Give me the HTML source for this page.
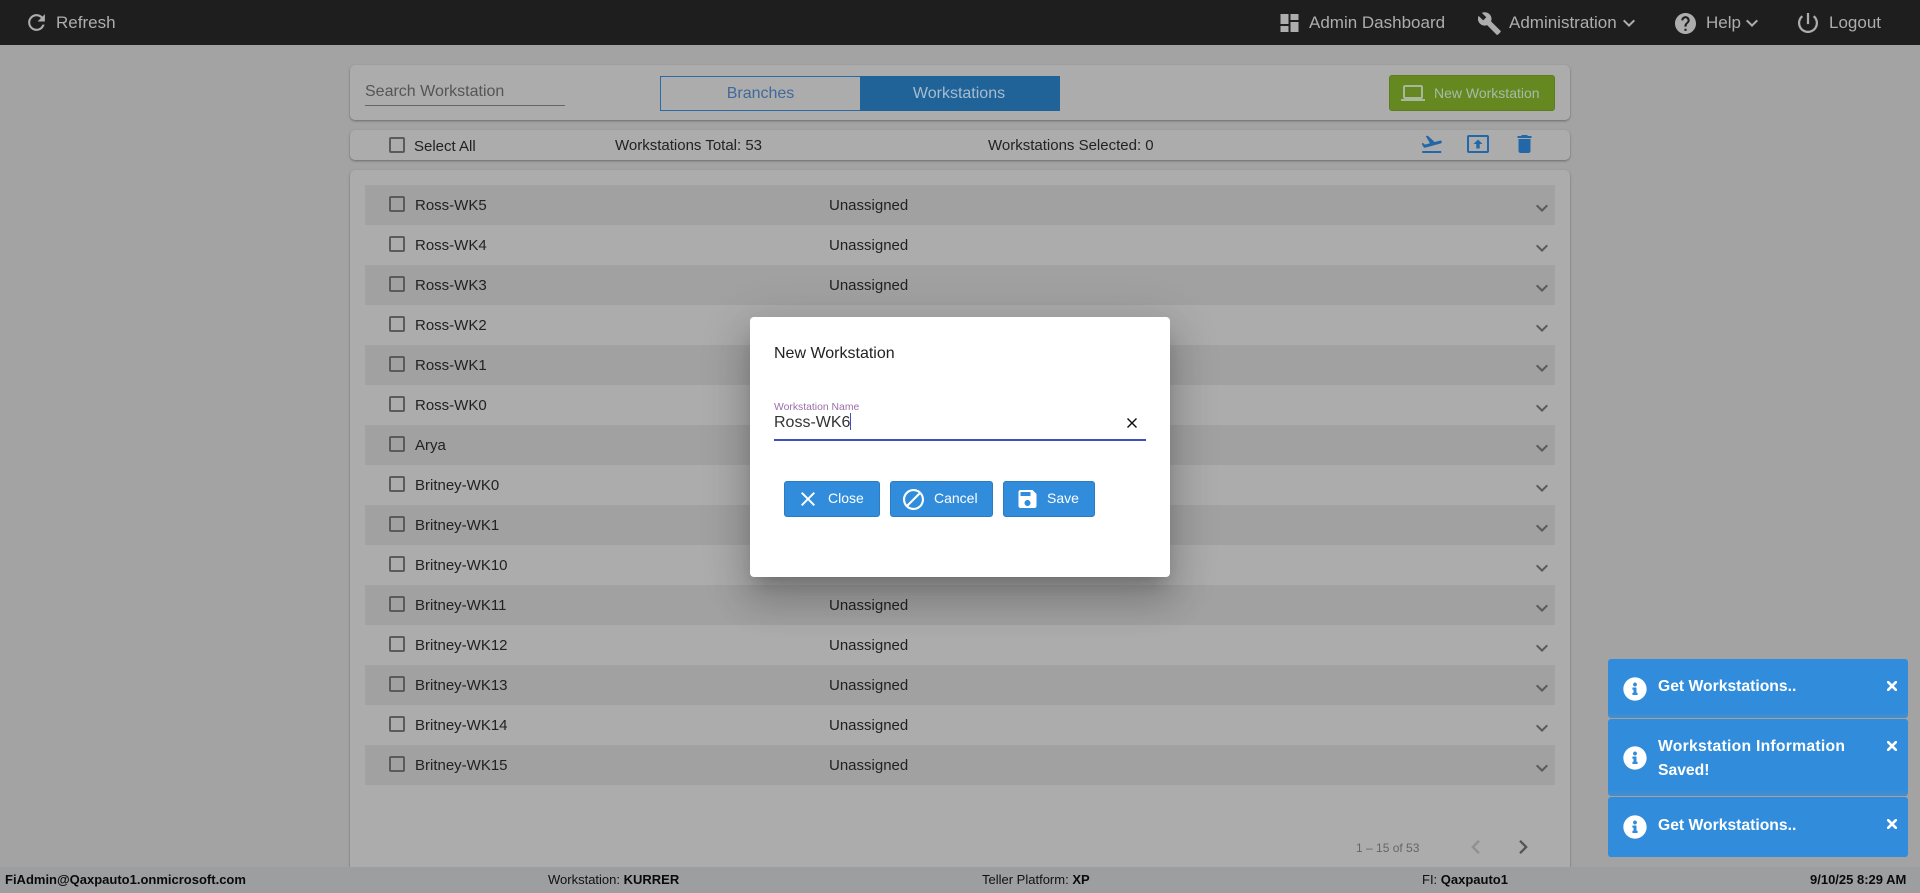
<!DOCTYPE html>
<html><head><meta charset="utf-8"><title>Workstations</title>
<style>
html,body{margin:0;padding:0;width:1920px;height:893px;overflow:hidden;background:#a3a3a3;font-family:"Liberation Sans",Arial,sans-serif}
.a{position:absolute}
.t{position:absolute;white-space:nowrap;line-height:20px;height:20px}
svg{position:absolute;display:block}
.card{position:absolute;left:350px;width:1220px;background:#acacac;border-radius:5px;box-shadow:0 1px 2px rgba(0,0,0,.35)}
.row{position:absolute;left:365px;width:1190px;height:40px}
.row.s{background:#a1a1a1}
.cb{position:absolute;left:389px;width:12px;height:12px;border:2px solid #5b5b5b;border-radius:2px}
.n{font-size:15px;color:#222;margin-top:1px}
.nav{font-size:17px;color:#adadad;margin-top:1px}
.btn{position:absolute;top:481px;height:34px;background:#318ddc;border:1px solid #2b7cc2;border-radius:3px}
.bt{font-size:14px;color:#fff;top:488px}
.toast{position:absolute;left:1608px;width:300px;background:#318ddc;border-radius:3px}
.tt{font-size:15.7px;font-weight:bold;color:#fff;left:1658px;margin-top:1px}
.f{font-size:13px;color:#111;top:870px}
.f b{color:#0a0a0a}
</style></head><body>

<!-- top bar -->
<div class="a" style="left:0;top:0;width:1920px;height:45px;background:#1e1e1e"></div>
<svg style="left:25px;top:11px" width="23" height="23" viewBox="1 1 22 22" fill="#adadad"><path d="M17.65 6.35C16.2 4.9 14.21 4 12 4c-4.42 0-7.99 3.58-7.99 8s3.57 8 7.99 8c3.73 0 6.84-2.55 7.73-6h-2.08c-.82 2.33-3.04 4-5.65 4-3.31 0-6-2.69-6-6s2.69-6 6-6c1.66 0 3.14.69 4.22 1.78L13 11h7V4l-2.35 2.35z"/></svg>
<div class="t nav" style="left:56px;top:12px">Refresh</div>
<svg style="left:1280px;top:14px" width="19" height="18" viewBox="3 3 18 18" fill="#adadad"><path d="M3 13h8V3H3v10zm0 8h8v-6H3v6zm10 0h8V11h-8v10zm0-18v6h8V3h-8z"/></svg>
<div class="t nav" style="left:1309px;top:12px">Admin Dashboard</div>
<svg style="left:1478px;top:12px" width="23" height="23" viewBox="1 1 22.2 22" fill="#adadad"><path d="M22.7 19l-9.1-9.1c.9-2.3.4-5-1.5-6.9-2-2-5-2.4-7.4-1.3L9 6 6 9 1.6 4.7C.4 7.1.9 10.1 2.9 12.1c1.9 1.9 4.6 2.4 6.9 1.5l9.1 9.1c.4.4 1 .4 1.4 0l2.3-2.3c.5-.4.5-1.1.1-1.4z"/></svg>
<div class="t nav" style="left:1509px;top:12px">Administration</div>
<svg style="left:1623px;top:19px" width="12" height="8" viewBox="6 8 12 8" fill="#adadad"><path d="M16.59 8.59L12 13.17 7.41 8.59 6 10l6 6 6-6z"/></svg>
<svg style="left:1675px;top:13px" width="21" height="21" viewBox="2 2 20 20" fill="#adadad"><path d="M12 2C6.48 2 2 6.48 2 12s4.48 10 10 10 10-4.48 10-10S17.52 2 12 2zm1 17h-2v-2h2v2zm2.07-7.75l-.9.92C13.45 12.9 13 13.5 13 15h-2v-.5c0-1.1.45-2.1 1.17-2.83l1.24-1.26c.37-.36.59-.86.59-1.41 0-1.1-.9-2-2-2s-2 .9-2 2H8c0-2.21 1.79-4 4-4s4 1.79 4 4c0 .88-.36 1.68-.93 2.25z"/></svg>
<div class="t nav" style="left:1706px;top:12px">Help</div>
<svg style="left:1746px;top:19px" width="12" height="8" viewBox="6 8 12 8" fill="#adadad"><path d="M16.59 8.59L12 13.17 7.41 8.59 6 10l6 6 6-6z"/></svg>
<svg style="left:1798px;top:13px" width="20" height="20" viewBox="3 3 18 18" fill="#adadad"><path d="M13 3h-2v10h2V3zm4.83 2.17l-1.42 1.42C17.99 7.86 19 9.81 19 12c0 3.87-3.13 7-7 7s-7-3.13-7-7c0-2.19 1.01-4.14 2.58-5.42L6.17 5.17C4.23 6.82 3 9.26 3 12c0 4.97 4.03 9 9 9s9-4.03 9-9c0-2.74-1.23-5.18-3.17-6.83z"/></svg>
<div class="t nav" style="left:1829px;top:12px">Logout</div>

<!-- header card -->
<div class="card" style="top:65px;height:55px"></div>
<div class="t" style="left:365px;top:82px;font-size:16px;color:#555">Search Workstation</div>
<div class="a" style="left:365px;top:105px;width:200px;height:1px;background:#666"></div>
<div class="a" style="left:660px;top:76px;width:200px;height:35px;box-sizing:border-box;border:1px solid #2a6ba5;border-right:0"></div>
<div class="a" style="left:860px;top:76px;width:200px;height:35px;background:#206399"></div>
<div class="t" style="left:660px;width:201px;text-align:center;top:84px;font-size:16px;color:#41699c">Branches</div>
<div class="t" style="left:860px;width:198px;text-align:center;top:84px;font-size:16px;color:#a6bccf">Workstations</div>
<div class="a" style="left:1389px;top:75px;width:164px;height:34px;background:#668820;border:1px solid #5d7d1d;border-radius:3px"></div>
<svg style="left:1401px;top:85px" width="24" height="16" viewBox="0 4 24 16" fill="#a9b89c"><path d="M20 18c1.1 0 1.99-.9 1.99-2L22 6c0-1.1-.9-2-2-2H4c-1.1 0-2 .9-2 2v10c0 1.1.9 2 2 2H0v2h24v-2h-4zM4 6h16v10H4V6z"/></svg>
<div class="t" style="left:1434px;top:83px;font-size:14px;color:#a9bba8">New Workstation</div>

<!-- toolbar card -->
<div class="card" style="top:130px;height:30px"></div>
<div class="cb" style="top:137px"></div>
<div class="t n" style="left:414px;top:136px">Select All</div>
<div class="t n" style="left:615px;top:135px">Workstations Total: 53</div>
<div class="t n" style="left:988px;top:135px">Workstations Selected: 0</div>
<svg style="left:1422px;top:135px" width="20" height="18" viewBox="2.3 3 20 18" fill="#2268a8"><path d="M2.5 19h19v2h-19zm19.57-9.36c-.21-.8-1.04-1.28-1.84-1.06L14.92 10l-6.9-6.43-1.93.51 4.14 7.17-4.97 1.33-1.97-1.54-1.45.39 1.82 3.16.77 1.33 1.6-.43 5.31-1.42 4.35-1.16L21 11.49c.81-.23 1.28-1.05 1.07-1.85z"/></svg>
<svg style="left:1467px;top:135px" width="22" height="18" viewBox="0 0 22 18"><rect x="1" y="1" width="20" height="16" rx="1" fill="none" stroke="#2268a8" stroke-width="2"/><path d="M11 4.5l-4.5 4.5h2.8v4.5h3.4V9h2.8z" fill="#2268a8"/></svg>
<svg style="left:1517px;top:135px" width="15" height="18" viewBox="5 3 14 18" fill="#2268a8"><path d="M6 19c0 1.1.9 2 2 2h8c1.1 0 2-.9 2-2V7H6v12zM19 4h-3.5l-1-1h-5l-1 1H5v2h14V4z"/></svg>

<!-- list card -->
<div class="card" style="top:170px;height:720px"></div>

<div class="row s" style="top:185px"></div>
<div class="row" style="top:225px"></div>
<div class="row s" style="top:265px"></div>
<div class="row" style="top:305px"></div>
<div class="row s" style="top:345px"></div>
<div class="row" style="top:385px"></div>
<div class="row s" style="top:425px"></div>
<div class="row" style="top:465px"></div>
<div class="row s" style="top:505px"></div>
<div class="row" style="top:545px"></div>
<div class="row s" style="top:585px"></div>
<div class="row" style="top:625px"></div>
<div class="row s" style="top:665px"></div>
<div class="row" style="top:705px"></div>
<div class="row s" style="top:745px"></div>

<div class="cb" style="top:196px"></div><div class="t n" style="left:415px;top:195px">Ross-WK5</div><div class="t n" style="left:829px;top:195px">Unassigned</div>
<div class="cb" style="top:236px"></div><div class="t n" style="left:415px;top:235px">Ross-WK4</div><div class="t n" style="left:829px;top:235px">Unassigned</div>
<div class="cb" style="top:276px"></div><div class="t n" style="left:415px;top:275px">Ross-WK3</div><div class="t n" style="left:829px;top:275px">Unassigned</div>
<div class="cb" style="top:316px"></div><div class="t n" style="left:415px;top:315px">Ross-WK2</div>
<div class="cb" style="top:356px"></div><div class="t n" style="left:415px;top:355px">Ross-WK1</div>
<div class="cb" style="top:396px"></div><div class="t n" style="left:415px;top:395px">Ross-WK0</div>
<div class="cb" style="top:436px"></div><div class="t n" style="left:415px;top:435px">Arya</div>
<div class="cb" style="top:476px"></div><div class="t n" style="left:415px;top:475px">Britney-WK0</div>
<div class="cb" style="top:516px"></div><div class="t n" style="left:415px;top:515px">Britney-WK1</div>
<div class="cb" style="top:556px"></div><div class="t n" style="left:415px;top:555px">Britney-WK10</div>
<div class="cb" style="top:596px"></div><div class="t n" style="left:415px;top:595px">Britney-WK11</div><div class="t n" style="left:829px;top:595px">Unassigned</div>
<div class="cb" style="top:636px"></div><div class="t n" style="left:415px;top:635px">Britney-WK12</div><div class="t n" style="left:829px;top:635px">Unassigned</div>
<div class="cb" style="top:676px"></div><div class="t n" style="left:415px;top:675px">Britney-WK13</div><div class="t n" style="left:829px;top:675px">Unassigned</div>
<div class="cb" style="top:716px"></div><div class="t n" style="left:415px;top:715px">Britney-WK14</div><div class="t n" style="left:829px;top:715px">Unassigned</div>
<div class="cb" style="top:756px"></div><div class="t n" style="left:415px;top:755px">Britney-WK15</div><div class="t n" style="left:829px;top:755px">Unassigned</div>

<svg style="left:1536px;top:204px" width="12" height="8" viewBox="6 8 12 8" fill="#5a5a5a"><path d="M16.59 8.59L12 13.17 7.41 8.59 6 10l6 6 6-6z"/></svg>
<svg style="left:1536px;top:244px" width="12" height="8" viewBox="6 8 12 8" fill="#5a5a5a"><path d="M16.59 8.59L12 13.17 7.41 8.59 6 10l6 6 6-6z"/></svg>
<svg style="left:1536px;top:284px" width="12" height="8" viewBox="6 8 12 8" fill="#5a5a5a"><path d="M16.59 8.59L12 13.17 7.41 8.59 6 10l6 6 6-6z"/></svg>
<svg style="left:1536px;top:324px" width="12" height="8" viewBox="6 8 12 8" fill="#5a5a5a"><path d="M16.59 8.59L12 13.17 7.41 8.59 6 10l6 6 6-6z"/></svg>
<svg style="left:1536px;top:364px" width="12" height="8" viewBox="6 8 12 8" fill="#5a5a5a"><path d="M16.59 8.59L12 13.17 7.41 8.59 6 10l6 6 6-6z"/></svg>
<svg style="left:1536px;top:404px" width="12" height="8" viewBox="6 8 12 8" fill="#5a5a5a"><path d="M16.59 8.59L12 13.17 7.41 8.59 6 10l6 6 6-6z"/></svg>
<svg style="left:1536px;top:444px" width="12" height="8" viewBox="6 8 12 8" fill="#5a5a5a"><path d="M16.59 8.59L12 13.17 7.41 8.59 6 10l6 6 6-6z"/></svg>
<svg style="left:1536px;top:484px" width="12" height="8" viewBox="6 8 12 8" fill="#5a5a5a"><path d="M16.59 8.59L12 13.17 7.41 8.59 6 10l6 6 6-6z"/></svg>
<svg style="left:1536px;top:524px" width="12" height="8" viewBox="6 8 12 8" fill="#5a5a5a"><path d="M16.59 8.59L12 13.17 7.41 8.59 6 10l6 6 6-6z"/></svg>
<svg style="left:1536px;top:564px" width="12" height="8" viewBox="6 8 12 8" fill="#5a5a5a"><path d="M16.59 8.59L12 13.17 7.41 8.59 6 10l6 6 6-6z"/></svg>
<svg style="left:1536px;top:604px" width="12" height="8" viewBox="6 8 12 8" fill="#5a5a5a"><path d="M16.59 8.59L12 13.17 7.41 8.59 6 10l6 6 6-6z"/></svg>
<svg style="left:1536px;top:644px" width="12" height="8" viewBox="6 8 12 8" fill="#5a5a5a"><path d="M16.59 8.59L12 13.17 7.41 8.59 6 10l6 6 6-6z"/></svg>
<svg style="left:1536px;top:684px" width="12" height="8" viewBox="6 8 12 8" fill="#5a5a5a"><path d="M16.59 8.59L12 13.17 7.41 8.59 6 10l6 6 6-6z"/></svg>
<svg style="left:1536px;top:724px" width="12" height="8" viewBox="6 8 12 8" fill="#5a5a5a"><path d="M16.59 8.59L12 13.17 7.41 8.59 6 10l6 6 6-6z"/></svg>
<svg style="left:1536px;top:764px" width="12" height="8" viewBox="6 8 12 8" fill="#5a5a5a"><path d="M16.59 8.59L12 13.17 7.41 8.59 6 10l6 6 6-6z"/></svg>

<!-- pagination -->
<div class="t" style="left:1356px;top:838px;font-size:12px;color:#666">1 – 15 of 53</div>
<svg style="left:1471px;top:840px" width="9" height="14" viewBox="8 6 7.41 12" fill="#909090"><path d="M15.41 7.41L14 6l-6 6 6 6 1.41-1.41L10.83 12z"/></svg>
<svg style="left:1519px;top:840px" width="9" height="14" viewBox="8.59 6 7.41 12" fill="#555"><path d="M10 6L8.59 7.41 13.17 12l-4.58 4.59L10 18l6-6z"/></svg>

<!-- footer -->
<div class="a" style="left:0;top:867px;width:1920px;height:26px;background:#9d9e9f"></div>
<div class="t f" style="left:5px"><b>FiAdmin@Qaxpauto1.onmicrosoft.com</b></div>
<div class="t f" style="left:548px">Workstation: <b>KURRER</b></div>
<div class="t f" style="left:982px">Teller Platform: <b>XP</b></div>
<div class="t f" style="left:1422px">FI: <b>Qaxpauto1</b></div>
<div class="t f" style="left:1810px"><b>9/10/25 8:29 AM</b></div>

<!-- modal -->
<div class="a" style="left:750px;top:317px;width:420px;height:260px;background:#fff;border-radius:4px;box-shadow:0 11px 15px -7px rgba(0,0,0,.2),0 24px 38px 3px rgba(0,0,0,.14),0 9px 46px 8px rgba(0,0,0,.12)"></div>
<div class="t" style="left:774px;top:344px;font-size:16px;color:#222">New Workstation</div>
<div class="t" style="left:774px;top:398px;font-size:10.4px;color:#9c6fa8">Workstation Name</div>
<div class="t" style="left:774px;top:413px;font-size:16px;color:#333">Ross-WK6</div>
<div class="a" style="left:850px;top:413px;width:1px;height:17px;background:#3f51b5"></div>
<svg style="left:1127px;top:418px" width="10" height="10" viewBox="5 5 14 14" fill="#111"><path d="M19 6.41L17.59 5 12 10.59 6.41 5 5 6.41 10.59 12 5 17.59 6.41 19 12 13.41 17.59 19 19 17.59 13.41 12z"/></svg>
<div class="a" style="left:774px;top:439px;width:372px;height:2px;background:#3f51b5"></div>

<div class="btn" style="left:784px;width:94px"></div>
<svg style="left:801px;top:492px" width="14" height="14" viewBox="5 5 14 14" fill="#fff"><path d="M19 6.41L17.59 5 12 10.59 6.41 5 5 6.41 10.59 12 5 17.59 6.41 19 12 13.41 17.59 19 19 17.59 13.41 12z"/></svg>
<div class="t bt" style="left:828px">Close</div>
<div class="btn" style="left:890px;width:101px"></div>
<svg style="left:903px;top:489px" width="21" height="21" viewBox="2 2 20 20" fill="#fff"><path d="M12 2C6.48 2 2 6.48 2 12s4.48 10 10 10 10-4.48 10-10S17.52 2 12 2zM4 12c0-4.42 3.58-8 8-8 1.85 0 3.55.63 4.9 1.69L5.69 16.9C4.63 15.55 4 13.85 4 12zm8 8c-1.85 0-3.55-.63-4.9-1.69L18.31 7.1C19.37 8.45 20 10.15 20 12c0 4.42-3.58 8-8 8z"/></svg>
<div class="t bt" style="left:934px">Cancel</div>
<div class="btn" style="left:1003px;width:90px"></div>
<svg style="left:1018px;top:490px" width="19" height="18" viewBox="3 3 18 18" fill="#fff"><path d="M17 3H5c-1.11 0-2 .9-2 2v14c0 1.1.89 2 2 2h14c1.1 0 2-.9 2-2V7l-4-4zm-5 16c-1.66 0-3-1.34-3-3s1.34-3 3-3 3 1.34 3 3-1.34 3-3 3zm3-10H5V5h10v4z"/></svg>
<div class="t bt" style="left:1047px">Save</div>

<!-- toasts -->
<div class="toast" style="top:659px;height:59px;background:linear-gradient(#318ddc 90%,#4b8dc6)"></div>
<div class="toast" style="top:719px;height:77px;background:linear-gradient(#318ddc 92%,#4b8dc6)"></div>
<div class="toast" style="top:797px;height:60px"></div>

<svg style="left:1623px;top:677px" width="24" height="24" viewBox="0 0 512 512" fill="#fff"><path d="M256 8C119.043 8 8 119.083 8 256c0 136.997 111.043 248 248 248s248-111.003 248-248C504 119.083 392.957 8 256 8zm0 110c23.196 0 42 18.804 42 42s-18.804 42-42 42-42-18.804-42-42 18.804-42 42-42zm56 254c0 6.627-5.373 12-12 12h-88c-6.627 0-12-5.373-12-12v-24c0-6.627 5.373-12 12-12h12v-64h-12c-6.627 0-12-5.373-12-12v-24c0-6.627 5.373-12 12-12h64c6.627 0 12 5.373 12 12v100h12c6.627 0 12 5.373 12 12v24z"/></svg>
<div class="t tt" style="top:676px">Get Workstations..</div>
<svg style="left:1887px;top:681px" width="10" height="10" viewBox="0 0 10 10"><path d="M1.2 1.2L8.8 8.8M8.8 1.2L1.2 8.8" stroke="#fff" stroke-width="2.6" stroke-linecap="round"/></svg>

<svg style="left:1623px;top:746px" width="24" height="24" viewBox="0 0 512 512" fill="#fff"><path d="M256 8C119.043 8 8 119.083 8 256c0 136.997 111.043 248 248 248s248-111.003 248-248C504 119.083 392.957 8 256 8zm0 110c23.196 0 42 18.804 42 42s-18.804 42-42 42-42-18.804-42-42 18.804-42 42-42zm56 254c0 6.627-5.373 12-12 12h-88c-6.627 0-12-5.373-12-12v-24c0-6.627 5.373-12 12-12h12v-64h-12c-6.627 0-12-5.373-12-12v-24c0-6.627 5.373-12 12-12h64c6.627 0 12 5.373 12 12v100h12c6.627 0 12 5.373 12 12v24z"/></svg>
<div class="t tt" style="top:736px;letter-spacing:-.27px;letter-spacing:.27px">Workstation Information</div>
<div class="t tt" style="top:760px">Saved!</div>
<svg style="left:1887px;top:741px" width="10" height="10" viewBox="0 0 10 10"><path d="M1.2 1.2L8.8 8.8M8.8 1.2L1.2 8.8" stroke="#fff" stroke-width="2.6" stroke-linecap="round"/></svg>

<svg style="left:1623px;top:815px" width="24" height="24" viewBox="0 0 512 512" fill="#fff"><path d="M256 8C119.043 8 8 119.083 8 256c0 136.997 111.043 248 248 248s248-111.003 248-248C504 119.083 392.957 8 256 8zm0 110c23.196 0 42 18.804 42 42s-18.804 42-42 42-42-18.804-42-42 18.804-42 42-42zm56 254c0 6.627-5.373 12-12 12h-88c-6.627 0-12-5.373-12-12v-24c0-6.627 5.373-12 12-12h12v-64h-12c-6.627 0-12-5.373-12-12v-24c0-6.627 5.373-12 12-12h64c6.627 0 12 5.373 12 12v100h12c6.627 0 12 5.373 12 12v24z"/></svg>
<div class="t tt" style="top:815px">Get Workstations..</div>
<svg style="left:1887px;top:819px" width="10" height="10" viewBox="0 0 10 10"><path d="M1.2 1.2L8.8 8.8M8.8 1.2L1.2 8.8" stroke="#fff" stroke-width="2.6" stroke-linecap="round"/></svg>

</body></html>
